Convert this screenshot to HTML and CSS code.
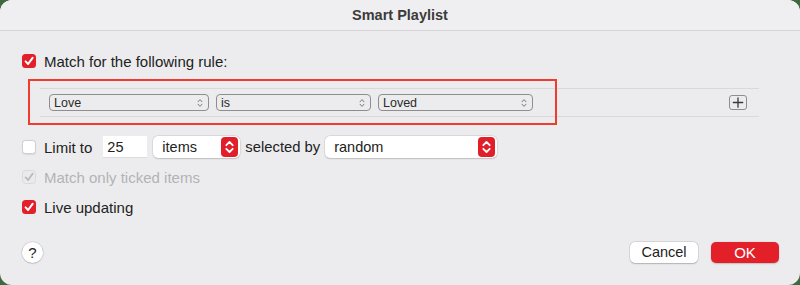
FILE: index.html
```html
<!DOCTYPE html>
<html>
<head>
<meta charset="utf-8">
<link rel="stylesheet" href="styles.css">
</head>
<body>
<div class="window">
  <div class="titlebar">Smart Playlist</div>
  <div class="content">
    <div class="row row-match">
      <span class="cb cb-on"><svg viewBox="0 0 14 14" width="14" height="14"><path d="M3.6 7.4 L6.1 10 L10.6 3.8" fill="none" stroke="#fff" stroke-width="2" stroke-linecap="round" stroke-linejoin="round"/></svg></span>
      <span class="label">Match for the following rule:</span>
    </div>
    <div class="rule">
      <div class="rule-fields">
        <div class="popup popup-wide"><span>Love</span><svg class="chev" viewBox="0 0 6 10" width="6" height="10"><path d="M1 3.8 L3 1.6 L5 3.8 M1 6.2 L3 8.4 L5 6.2" fill="none" stroke="#7a7a7c" stroke-width="1" stroke-linecap="round" stroke-linejoin="round"/></svg></div>
        <div class="popup"><span>is</span><svg class="chev" viewBox="0 0 6 10" width="6" height="10"><path d="M1 3.8 L3 1.6 L5 3.8 M1 6.2 L3 8.4 L5 6.2" fill="none" stroke="#7a7a7c" stroke-width="1" stroke-linecap="round" stroke-linejoin="round"/></svg></div>
        <div class="popup"><span>Loved</span><svg class="chev" viewBox="0 0 6 10" width="6" height="10"><path d="M1 3.8 L3 1.6 L5 3.8 M1 6.2 L3 8.4 L5 6.2" fill="none" stroke="#7a7a7c" stroke-width="1" stroke-linecap="round" stroke-linejoin="round"/></svg></div>
      </div>
      <div class="plus"><svg viewBox="0 0 18 15" width="18" height="15"><path d="M9 2.8 V12.2 M4.3 7.5 H13.7" stroke="#3a3a3a" stroke-width="1.3" stroke-linecap="round"/></svg></div>
    </div>
    <div class="row row-limit">
      <span class="cb cb-off"></span>
      <span class="label">Limit to</span>
      <span class="field">25</span>
      <div class="select select-items"><span>items</span><span class="stepper"><svg viewBox="0 0 17 20" width="17" height="20"><path d="M5.3 8.2 L8.5 5 L11.7 8.2 M5.3 11.8 L8.5 15 L11.7 11.8" fill="none" stroke="#fff" stroke-width="1.8" stroke-linecap="round" stroke-linejoin="round"/></svg></span></div>
      <span class="label label-by">selected by</span>
      <div class="select select-random"><span>random</span><span class="stepper"><svg viewBox="0 0 17 20" width="17" height="20"><path d="M5.3 8.2 L8.5 5 L11.7 8.2 M5.3 11.8 L8.5 15 L11.7 11.8" fill="none" stroke="#fff" stroke-width="1.8" stroke-linecap="round" stroke-linejoin="round"/></svg></span></div>
    </div>
    <div class="row row-ticked">
      <span class="cb cb-disabled"><svg viewBox="0 0 14 14" width="14" height="14"><path d="M3.6 7.4 L6.1 10 L10.6 3.8" fill="none" stroke="#b9b9bb" stroke-width="1.8" stroke-linecap="round" stroke-linejoin="round"/></svg></span>
      <span class="label label-disabled">Match only ticked items</span>
    </div>
    <div class="row row-live">
      <span class="cb cb-on"><svg viewBox="0 0 14 14" width="14" height="14"><path d="M3.6 7.4 L6.1 10 L10.6 3.8" fill="none" stroke="#fff" stroke-width="2" stroke-linecap="round" stroke-linejoin="round"/></svg></span>
      <span class="label">Live updating</span>
    </div>
    <div class="footer">
      <div class="help">?</div>
      <div class="buttons">
        <div class="btn btn-cancel">Cancel</div>
        <div class="btn btn-ok">OK</div>
      </div>
    </div>
  </div>
  <div class="highlight"></div>
</div>
</body>
</html>
```
FILE: styles.css
```css
html, body {
  margin: 0;
  padding: 0;
}
body {
  width: 800px;
  height: 285px;
  background: #3c6a3e;
  font-family: "Liberation Sans", Arial, sans-serif;
  color: #222;
  overflow: hidden;
}
.window {
  position: relative;
  width: 800px;
  height: 285px;
  border-radius: 12px;
  background: #ececee;
  overflow: hidden;
}
.titlebar {
  height: 30px;
  border-bottom: 1px solid #d4d4d6;
  background: #efeff1;
  display: flex;
  align-items: center;
  justify-content: center;
  font-weight: bold;
  font-size: 14.5px;
  color: #3b3b3b;
}
.content {
  padding-left: 22px;
}
.row {
  height: 22px;
  display: flex;
  align-items: center;
}
.row-match { margin-top: 19px; }
.row-limit { margin-top: 19px; }
.row-ticked { margin-top: 8px; }
.row-live { margin-top: 8px; }
.label {
  font-size: 15px;
  margin-left: 8px;
  white-space: nowrap;
}
.label-disabled { color: #b3b3b5; }
.cb {
  width: 14px;
  height: 14px;
  border-radius: 3.5px;
  box-sizing: border-box;
  flex: none;
  display: flex;
}
.cb-on {
  background: #e2202b;
}
.cb-off {
  background: #fff;
  border: 1px solid #cfcfd1;
  box-shadow: 0 0.5px 1px rgba(0,0,0,0.08);
}
.cb-disabled {
  background: #eaeaec;
  border: 1px solid #dadadc;
}
.cb-disabled svg { margin: -1px; }
.rule {
  margin: 16px 0 0 18px;
  width: 698px;
  height: 27px;
  border-top: 1px solid #d9d9db;
  border-bottom: 1px solid #d9d9db;
  display: flex;
  align-items: center;
  justify-content: space-between;
  padding: 0 12px 0 9px;
  box-sizing: content-box;
}
.rule-fields {
  display: flex;
  gap: 7px;
}
.popup {
  width: 155px;
  height: 17px;
  box-sizing: border-box;
  border: 1px solid #8e8e90;
  border-radius: 4px;
  display: flex;
  align-items: center;
  justify-content: space-between;
  padding: 0 5px 0 4px;
  font-size: 12.5px;
  color: #2a2a2a;
}
.popup-wide { width: 160px; }
.chev { flex: none; }
.plus {
  width: 18px;
  height: 15px;
  box-sizing: border-box;
  border: 1px solid #8e8e90;
  border-radius: 3px;
  display: flex;
  align-items: center;
  justify-content: center;
}
.plus svg { margin: -1px; }
.field {
  margin-left: 11px;
  width: 44px;
  height: 22px;
  box-sizing: border-box;
  background: #fff;
  border-bottom: 1px solid #dcdcde;
  font-size: 14.5px;
  padding-left: 4px;
  display: flex;
  align-items: center;
}
.select {
  height: 22px;
  box-sizing: border-box;
  background: #fff;
  border-radius: 5px;
  box-shadow: 0 0 0 0.5px rgba(0,0,0,0.1), 0 0.5px 1.5px rgba(0,0,0,0.15);
  display: flex;
  align-items: center;
  justify-content: space-between;
  padding: 0 2px 0 9px;
  font-size: 14.5px;
}
.select-items {
  margin-left: 6px;
  width: 87px;
}
.select-random {
  margin-left: 5px;
  width: 172px;
}
.label-by { margin-left: 5px; font-size: 14.8px; }
.stepper {
  width: 17px;
  height: 20px;
  border-radius: 4px;
  background: #e11f29;
  display: flex;
}
.footer {
  margin-top: 23px;
  height: 22px;
  display: flex;
  align-items: center;
  justify-content: space-between;
  padding-right: 21px;
}
.help {
  width: 21px;
  height: 21px;
  border-radius: 50%;
  background: #fff;
  box-shadow: 0 0 0 0.5px rgba(0,0,0,0.12), 0 0.5px 1.5px rgba(0,0,0,0.2);
  display: flex;
  align-items: center;
  justify-content: center;
  font-size: 15px;
  color: #222;
}
.buttons {
  display: flex;
  gap: 13px;
}
.btn {
  width: 68px;
  height: 21px;
  border-radius: 5px;
  display: flex;
  align-items: center;
  justify-content: center;
  font-size: 14.5px;
}
.btn-cancel {
  background: #fff;
  box-shadow: 0 0 0 0.5px rgba(0,0,0,0.12), 0 0.5px 1.5px rgba(0,0,0,0.2);
  color: #222;
}
.btn-ok {
  background: #e3202a;
  color: #fff;
  font-size: 15px;
  box-shadow: 0 0.5px 1.5px rgba(0,0,0,0.2);
}
.highlight {
  position: absolute;
  left: 28px;
  top: 79px;
  width: 529px;
  height: 46px;
  box-sizing: border-box;
  border: 2px solid #f03c2e;
}
```
